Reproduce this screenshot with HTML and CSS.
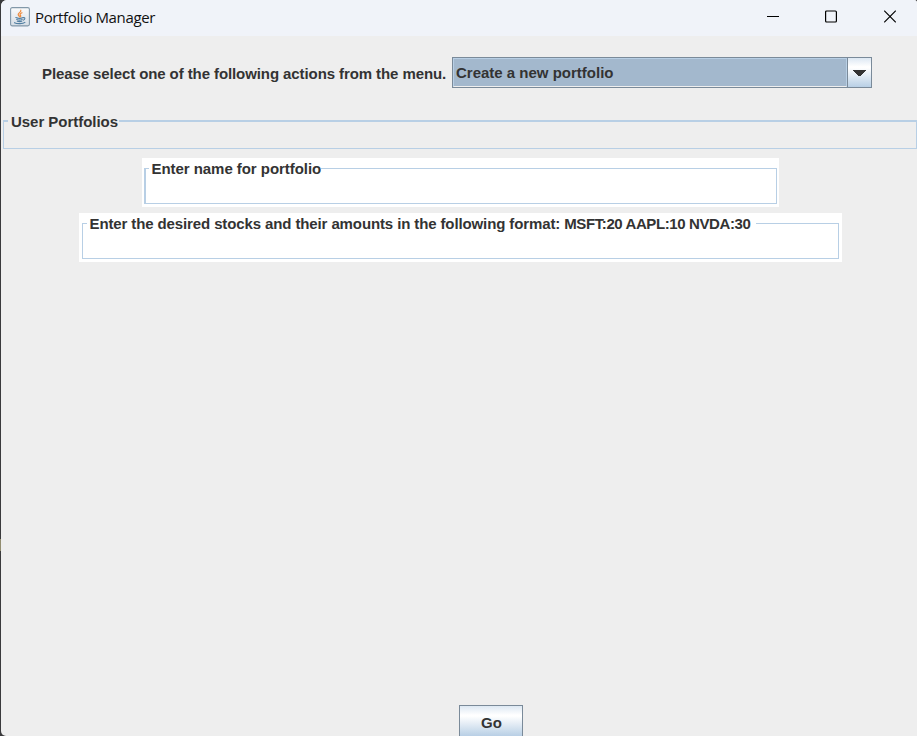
FILE: index.html
```
<!DOCTYPE html>
<html lang="en">
<head>
<meta charset="utf-8">
<title>Portfolio Manager</title>
<link rel="stylesheet" href="styles.css">
</head>
<body>
<div class="window">
  <header class="titlebar">
    <svg class="app-icon" width="20" height="20" viewBox="0 0 20 20">
      <defs>
        <linearGradient id="tile" x1="0" y1="0" x2="0" y2="1"><stop offset="0" stop-color="#fafbfc"/><stop offset="1" stop-color="#d5dde5"/></linearGradient>
      </defs>
      <rect x=".6" y=".6" width="18.8" height="18.3" rx="1.6" fill="url(#tile)" stroke="#8298a9" stroke-width="1.1"/>
      <g fill="none" stroke-linecap="round">
        <path d="M10.8 3.2c.8 2-3.3 2.8-2.6 4.6.3.8 1.1 1.2 1.2 2M12 5.8c-2.3 1-2.2 1.9-1.5 2.7.5.6.2 1.1-.4 1.5" stroke="#ee8a3c" stroke-width="1.2"/>
        <path d="M5.8 10.6c1.8.8 5.7.8 7.4 0M6.7 12.6c1.6.6 4.1.6 5.5 0M7.3 14.2c1.4.5 3.2.5 4.5 0M13.3 10.7c2.1-.4 2.1 1.8-.1 2.5M4.5 15.7c2.5 1.4 8.6 1.2 10.4-.3" stroke="#527fa2" stroke-width="1.1"/>
      </g>
    </svg>
    <span class="title">Portfolio Manager</span>
    <div class="controls">
      <svg width="12" height="13" viewBox="0 0 12 13"><path d="M0 6.5h12" stroke="#000"/></svg>
      <svg width="12" height="13" viewBox="0 0 12 13"><rect x=".6" y="1" width="10.8" height="11" rx="1" fill="none" stroke="#000" stroke-width="1.2"/></svg>
      <svg width="12" height="13" viewBox="0 0 12 13"><path d="M.2.7l11.6 11.6M11.8.7L.2 12.3" stroke="#000" stroke-width="1.15"/></svg>
    </div>
  </header>
  <main class="content">
    <div class="action-row">
      <span class="prompt">Please select one of the following actions from the menu.</span>
      <div class="combo">
        <div class="combo-value"><span>Create a new portfolio</span></div>
        <div class="combo-arrow">
          <svg width="13" height="6" viewBox="0 0 13 6" shape-rendering="crispEdges"><path d="M0 0h13v1h-1v1h-1v1h-1v1H9v1H8v1H5V5H4V4H3V3H2V2H1V1H0z" fill="#333"/></svg>
        </div>
      </div>
    </div>
    <fieldset class="group portfolios"><legend>User Portfolios</legend></fieldset>
    <div class="field name-field">
      <fieldset class="group"><legend>Enter name for portfolio</legend></fieldset>
    </div>
    <div class="field stocks-field">
      <fieldset class="group"><legend>Enter the desired stocks and their amounts in the following format: <span class="sample">MSFT:20 AAPL:10 NVDA:30</span></legend></fieldset>
    </div>
    <div class="go">Go</div>
  </main>
</div>
</body>
</html>
```
FILE: styles.css
```
* { box-sizing: border-box; }
body {
  margin: 0;
  background: linear-gradient(#3a3a3c 0 539px, #928d70 539px 551px, #3a3a3c 551px);
  font: bold 15px/17px "Liberation Sans", Arial, sans-serif;
  color: #333;
  overflow: hidden;
}
.window {
  height: 736px;
  margin-left: 1px;
  display: flex;
  flex-direction: column;
  background: #eee;
  border-radius: 6px 3px 0 5px;
  overflow: hidden;
}
.titlebar {
  flex: none;
  height: 36px;
  display: flex;
  align-items: flex-start;
  padding: 7px 21px 0 9px;
  background: #f0f3f9;
}
.app-icon { flex: none; }
.title {
  margin: 0 0 0 5px;
  font: 15px/20px "Open Sans", "Noto Sans", sans-serif;
  letter-spacing: -0.36px;
  color: #111;
  white-space: nowrap;
}
.controls { display: flex; gap: 47px; margin: 3px 0 0 auto; }
.controls svg:nth-child(2) { margin-left: -1px; }
.content { flex: 1; display: flex; flex-direction: column; align-items: center; }
.action-row {
  align-self: stretch;
  display: flex;
  padding: 21px 0 0 41px;
  height: 76px;
}
.prompt { width: 410px; padding-top: 8px; letter-spacing: -0.09px; white-space: nowrap; }
.combo { display: flex; width: 420px; height: 31px; border: 1px solid #7a8a99; }
.combo-value {
  flex: 1;
  border: 1px solid #b8cfe5;
  border-bottom-color: #eee;
  background: #a3b8cd;
  padding: 5px 0 0 2px;
  white-space: nowrap;
}
.combo-arrow {
  width: 24px;
  display: flex;
  align-items: center;
  justify-content: center;
  border-left: 1px solid #7a8a99;
  background: linear-gradient(#dde8f3, #fff 30%, #fff 34%, #b8cfe5);
}
.combo-arrow svg { flex: none; }
.group {
  min-width: 0;
  margin: 0;
  padding: 0 0 0 4px;
  border: 1px solid #b8cfe5;
}
.group legend { height: 17px; padding: 0 0 0 3px; white-space: nowrap; }
.portfolios { align-self: stretch; height: 37px; margin-left: 2px; border-top-width: 2px; }
.portfolios legend { width: 111px; height: 18px; line-height: 19px; letter-spacing: -0.03px; }
.field { background: #fff; height: 49px; }
.field .group { height: 44px; }
.name-field { width: 637px; margin: 9px 0 6px 2px; padding: 2px 2px 0; }
.name-field .group { border-left-width: 2px; padding-left: 3px; }
.name-field legend { width: 172px; padding-left: 3px; letter-spacing: -0.05px; }
.stocks-field { width: 763px; margin-left: 2px; padding: 2px 3px 0; }
.stocks-field legend { width: 669px; padding-left: 3px; letter-spacing: -0.115px; }
.sample { letter-spacing: -0.4px; }
.go {
  width: 64px;
  height: 31px;
  margin: auto 0 0 63px;
  padding: 8px 0 0 2px;
  text-align: center;
  border: 1px solid #7a8a99;
  border-bottom: 0;
  background: linear-gradient(#dde8f3, #fff 30%, #fff 34%, #b8cfe5);
}
```
